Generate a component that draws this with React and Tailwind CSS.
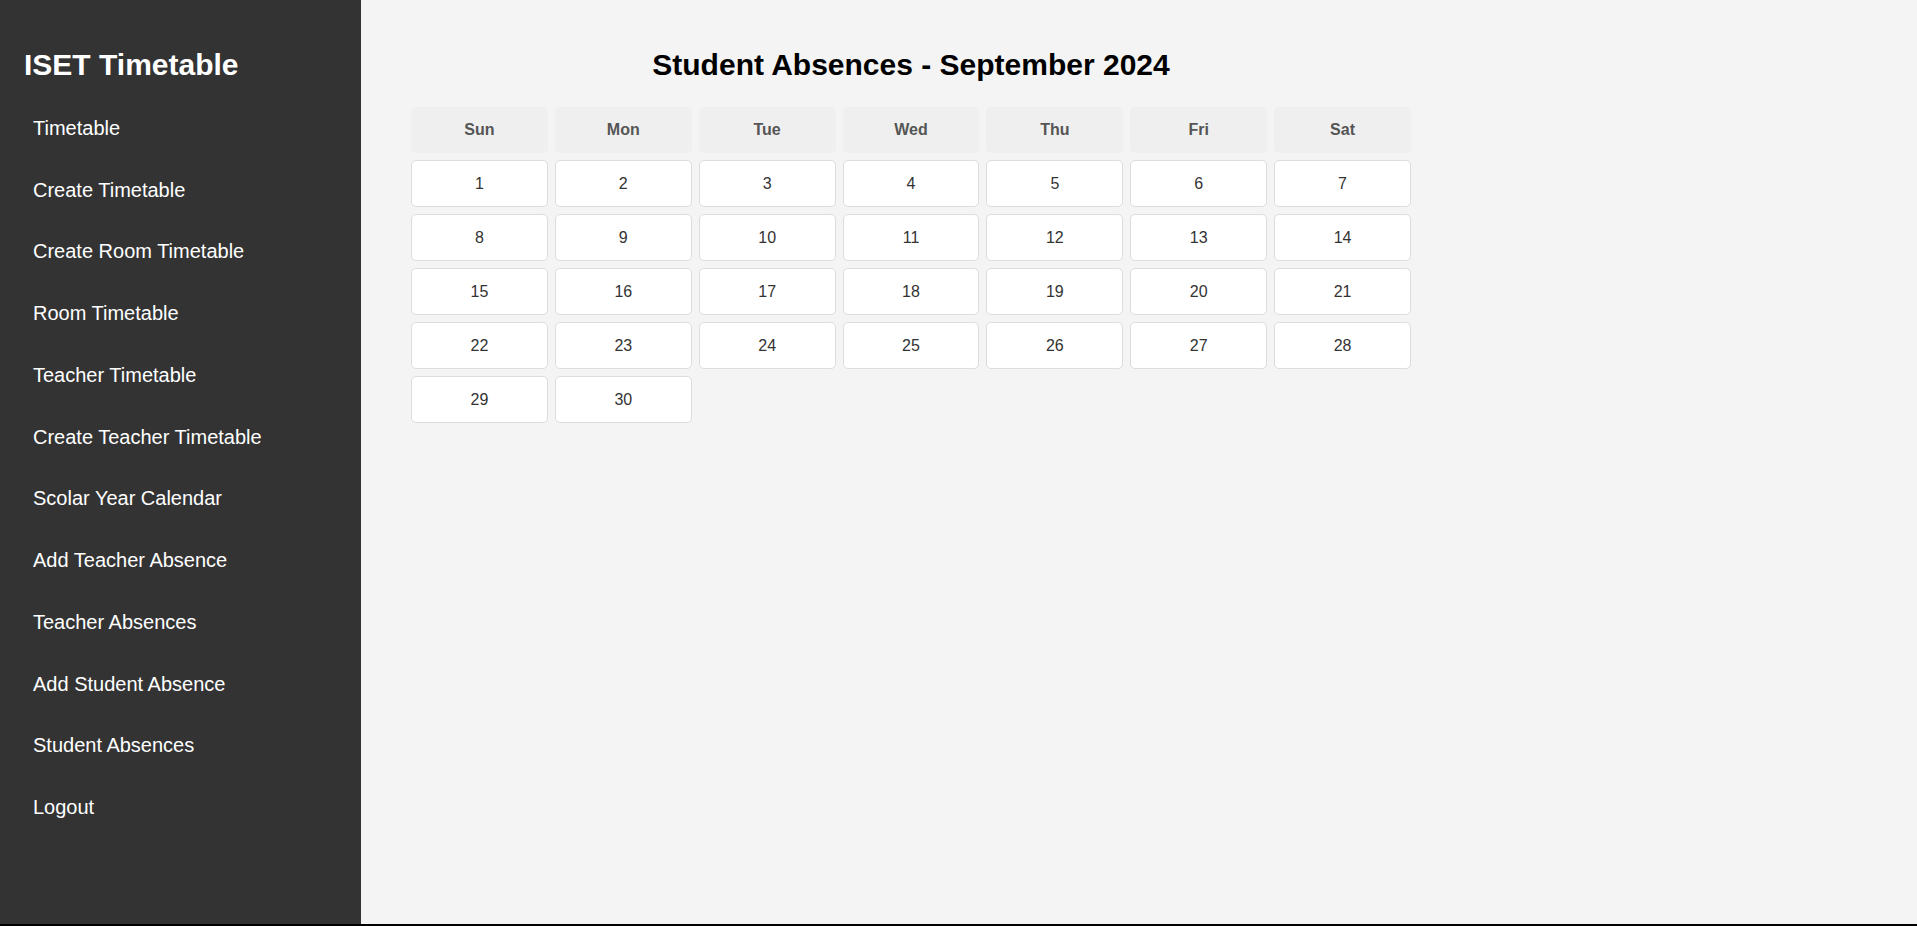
import React from "react";

const links = [
  "Timetable",
  "Create Timetable",
  "Create Room Timetable",
  "Room Timetable",
  "Teacher Timetable",
  "Create Teacher Timetable",
  "Scolar Year Calendar",
  "Add Teacher Absence",
  "Teacher Absences",
  "Add Student Absence",
  "Student Absences",
  "Logout",
];

const days = ["Sun", "Mon", "Tue", "Wed", "Thu", "Fri", "Sat"];

export default function App() {
  const dates = Array.from({ length: 30 }, (_, i) => i + 1);
  return (
    <div className="w-full" style={{ fontFamily: '"Liberation Sans", Arial, sans-serif' }}>
      <div className="flex h-[924px] w-full">
        <aside className="w-[361px] shrink-0 bg-[#333333] text-white px-6 pt-[47px]">
          <h2 className="text-[30px] leading-[35px] font-bold">ISET Timetable</h2>
          <nav className="mt-[15px] flex flex-col">
            {links.map((l) => (
              <a
                key={l}
                href="#"
                className="h-[61.75px] flex items-center pl-[9px] text-[20px] text-white"
              >
                {l}
              </a>
            ))}
          </nav>
        </aside>
        <main className="flex-1 bg-[#f4f4f4] pl-[50px] pt-[47px]">
          <div className="w-[1000px]">
            <h2 className="text-center text-[30px] leading-[35px] font-bold text-black">
              Student Absences - September 2024
            </h2>
            <div className="mt-[25px] grid grid-cols-7 gap-[7px]">
              {days.map((d) => (
                <div
                  key={d}
                  className="h-[46px] flex items-center justify-center rounded-[5px] bg-[#efefef] text-[16px] font-bold text-[#555555]"
                >
                  {d}
                </div>
              ))}
              {dates.map((n) => (
                <div
                  key={n}
                  className="h-[47px] flex items-center justify-center rounded-[5px] border border-[#dddddd] bg-white text-[16px] text-[#333333]"
                >
                  {n}
                </div>
              ))}
            </div>
          </div>
        </main>
      </div>
      <div className="h-[2px] w-full bg-black" />
    </div>
  );
}
